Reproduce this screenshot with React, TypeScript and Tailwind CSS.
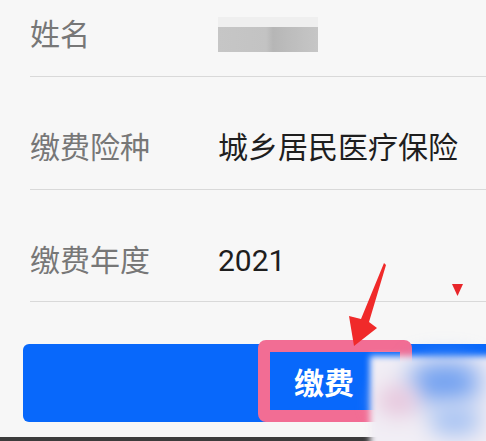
const baseFont = "font-['Roboto','Noto_Sans_CJK_SC',sans-serif]";

function Row({
  label,
  children,
  className,
}: {
  label: string;
  children: React.ReactNode;
  className: string;
}) {
  return (
    <div className={`flex items-center border-b border-[#d9d9d9] ${className}`}>
      <div className="w-[188px] h-[36px] leading-[36px] text-[30px] text-[#777]">{label}</div>
      {children}
    </div>
  );
}

export default function App() {
  return (
    <div className={`relative w-[486px] h-[441px] overflow-hidden bg-[#f7f7f7] ${baseFont}`}>
      <div className="ml-[30px] flex flex-col">
        <Row label="姓名" className="pt-[17px] pb-[23px]">
          {/* blurred name */}
          <div className="flex flex-col w-[100px] h-[36px] pt-[0px]">
            <div className="h-[10px] bg-[#efefef]" />
            <div className="h-[25px] bg-[linear-gradient(90deg,#c6c6c6_0%,#c3c3c3_48%,#b6b6b6_55%,#bcbcbc_70%,#c6c6c6_100%)]" />
          </div>
        </Row>
        <Row label="缴费险种" className="pt-[53px] pb-[23px]">
          <div className="h-[36px] leading-[36px] text-[30px] text-[#1e1e1e]">城乡居民医疗保险</div>
        </Row>
        <Row label="缴费年度" className="pt-[53px] pb-[22px]">
          <div className="h-[36px] leading-[36px] text-[30px] text-[#1e1e1e]">2021</div>
          <svg
            className="ml-auto mr-[23px] self-end mb-[-17px]"
            width="11"
            height="12"
            viewBox="0 0 11 12"
          >
            <polygon points="0,0 11,0 5.5,12" fill="#e8262a" />
          </svg>
        </Row>
      </div>

      <div className="mt-[42px] ml-[23px] w-[602px] h-[78px] rounded-[6px] bg-[#0868fb] flex items-center justify-center text-white text-[30px] font-bold">
        缴费
      </div>

      <div className="mt-[15px] h-[4px] bg-[#3c3c3c]" />

      {/* annotation box */}
      <div className="absolute left-[258px] top-[340px] w-[154px] h-[82px] rounded-[8px] border-[12px] border-[#f26d94]" />

      {/* annotation arrow */}
      <svg className="absolute left-0 top-0" width="486" height="441" viewBox="0 0 486 441">
        <polygon points="384,263 386,265 369,322 377,328 354,346 349,316 361,319" fill="#f02a2a" />
      </svg>

      {/* blurred watermark */}
      <div className="absolute left-[370px] top-[356px] w-[130px] h-[95px] bg-[#f1eef5] blur-[3px]">
        <div className="absolute left-[40px] top-[6px] w-[70px] h-[40px] rounded-full bg-[#6f9ff0] blur-[12px]" />
        <div className="absolute left-[8px] top-[30px] w-[40px] h-[30px] rounded-full bg-[#e7c6dc] blur-[10px]" />
        <div className="absolute left-[60px] top-[50px] w-[50px] h-[30px] rounded-full bg-[#a9c4f2] blur-[10px]" />
      </div>
    </div>
  );
}
